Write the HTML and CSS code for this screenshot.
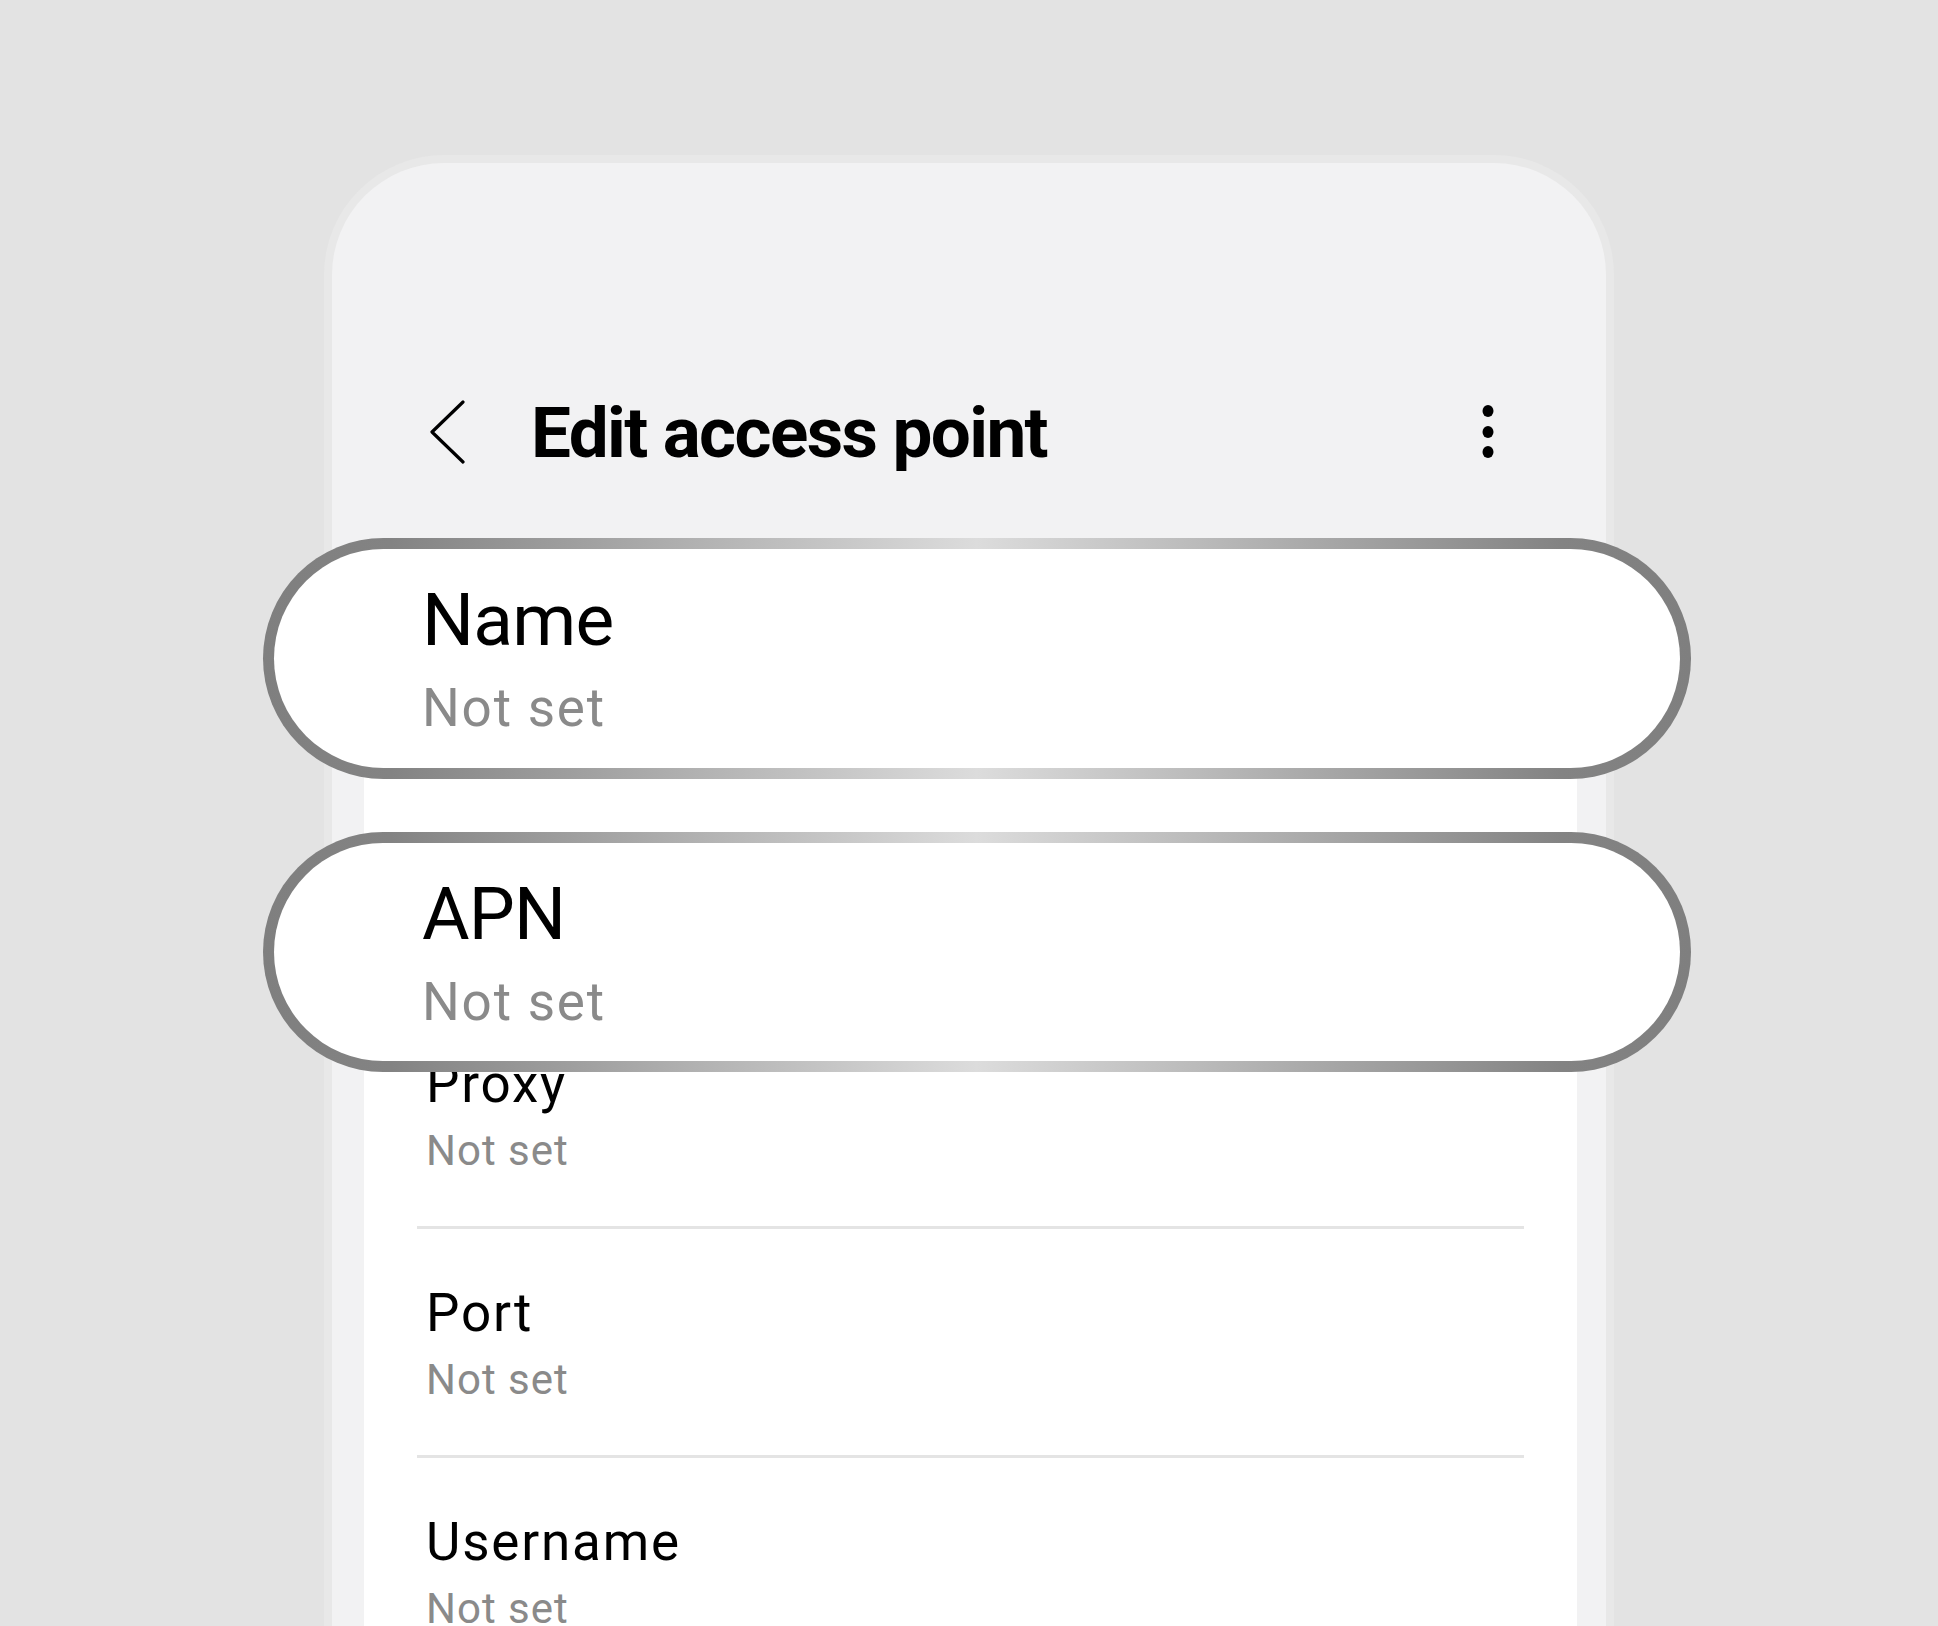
FILE: index.html
```html
<!DOCTYPE html>
<html lang="en">
<head>
    <meta charset="UTF-8">
    <meta name="viewport" content="width=device-width, initial-scale=1.0">
    <title>Edit access point</title>
    <link rel="stylesheet" href="styles.css">
</head>
<body>
    <div class="phone">
        <header class="app-bar">
            <svg class="back" width="40" height="64" viewBox="0 0 40 64">
                <polyline points="35,2 4,32 35,62" fill="none" stroke="#000" stroke-width="3.2" stroke-linecap="round" stroke-linejoin="round"/>
            </svg>
            <h1 class="title">Edit access point</h1>
            <svg class="more" width="16" height="60" viewBox="0 0 16 60">
                <ellipse cx="8" cy="9" rx="5.5" ry="6"/>
                <ellipse cx="8" cy="30" rx="5.5" ry="6"/>
                <ellipse cx="8" cy="50" rx="5.5" ry="6"/>
            </svg>
        </header>
        <ul class="settings">
            <li class="row"><div class="row-title">Name</div><div class="row-value">Not set</div></li>
            <li class="row"><div class="row-title">APN</div><div class="row-value">Not set</div></li>
            <li class="row"><div class="row-title">Proxy</div><div class="row-value">Not set</div></li>
            <li class="row"><div class="row-title">Port</div><div class="row-value">Not set</div></li>
            <li class="row"><div class="row-title">Username</div><div class="row-value">Not set</div></li>
        </ul>
    </div>

    <!-- magnified highlights over the list -->
    <div class="callout callout-name">
        <div class="callout-inner">
            <div class="callout-title">Name</div>
            <div class="callout-value">Not set</div>
        </div>
    </div>
    <div class="callout callout-apn">
        <div class="callout-inner">
            <div class="callout-title">APN</div>
            <div class="callout-value">Not set</div>
        </div>
    </div>
</body>
</html>
```

FILE: styles.css
```css
* {
    box-sizing: border-box;
}
body {
    font-family: Roboto, "Noto Sans", sans-serif;
    margin: 0;
    padding: 155px 0 0;
    height: 100vh;
    overflow: hidden;
    position: relative;
    background-color: #e3e3e3;
}
.phone {
    width: 1290px;
    height: 1600px;
    margin: 0 auto;
    padding-top: 209px;
    background-color: #f2f2f3;
    border: 8px solid #e8e8e8;
    border-bottom: none;
    border-radius: 120px 120px 0 0;
}
.app-bar {
    display: flex;
    align-items: center;
    height: 120px;
    padding: 0 110px 0 96px;
}
.back {
    flex-shrink: 0;
}
.title {
    margin: 0 0 0 63px;
    font-size: 71px;
    font-weight: 700;
    line-height: 1;
    letter-spacing: -1.6px;
    color: #000;
}
.more {
    margin-left: auto;
    fill: #000;
}
.settings {
    list-style: none;
    margin: 50px 29px 0 32px;
    padding: 0;
    background-color: #fff;
    border-radius: 30px 30px 0 0;
}
.row {
    margin: 0 53px;
    padding: 52px 9px 49px;
    border-bottom: 3px solid #e4e4e4;
}
.row:last-child {
    border-bottom: none;
}
.row-title {
    font-size: 53px;
    line-height: 64px;
    letter-spacing: 1.8px;
    color: #000;
}
.row-value {
    margin-top: 9px;
    font-size: 42px;
    line-height: 52px;
    letter-spacing: 1px;
    color: #8a8a8a;
}
.callout {
    position: absolute;
    left: 263px;
    width: 1428px;
    padding: 11px;
    border-radius: 130px;
    background: linear-gradient(90deg, #7f7f7f 0%, #838383 9%, #dcdcdc 50%, #838383 91%, #7f7f7f 100%);
}
.callout-name {
    top: 538px;
    height: 241px;
}
.callout-apn {
    top: 832px;
    height: 240px;
}
.callout-inner {
    height: 100%;
    display: flex;
    flex-direction: column;
    justify-content: center;
    padding-left: 148px;
    background-color: #fff;
    border-radius: 120px;
}
.callout-title {
    font-size: 73px;
    line-height: 86px;
    letter-spacing: -0.8px;
    color: #000;
}
.callout-value {
    margin-top: 13px;
    font-size: 53px;
    line-height: 64px;
    letter-spacing: 1.8px;
    color: #8a8a8a;
}
```
